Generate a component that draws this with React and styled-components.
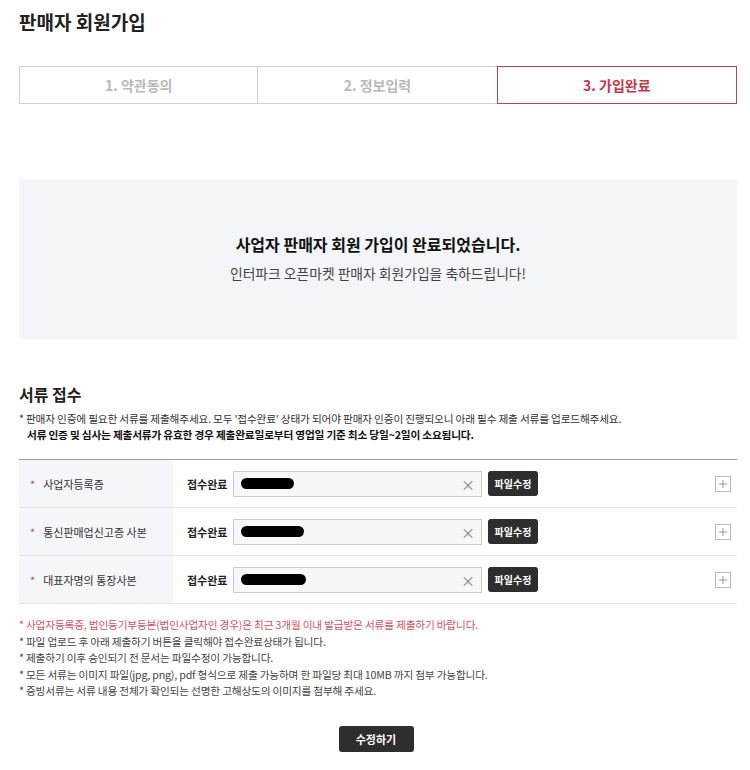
import React from 'react'
import styled, { createGlobalStyle } from 'styled-components'

const GlobalStyle = createGlobalStyle`
  html, body {
    margin: 0;
    padding: 0;
    background: #fff;
  }
  body {
    font-family: "Noto Sans CJK KR", "Noto Sans", sans-serif;
    color: #222;
  }
`

const Page = styled.div`
  width: 750px;
  padding: 8px 13px 0 19px;
  box-sizing: border-box;
`

const Title = styled.h1`
  margin: 0;
  font-size: 19px;
  font-weight: 700;
  line-height: 28px;
  color: #222;
`

const Steps = styled.div`
  display: grid;
  grid-template-columns: repeat(3, 1fr);
  margin-top: 30px;
  height: 38px;
`

const Step = styled.div`
  display: flex;
  align-items: center;
  justify-content: center;
  border: 1px solid ${p => (p.$active ? '#b8474d' : '#cfcfcf')};
  margin-left: ${p => (p.$first ? '0' : '-1px')};
  position: relative;
  z-index: ${p => (p.$active ? 1 : 0)};
  font-size: 14px;
  font-weight: 700;
  color: ${p => (p.$active ? '#c5394a' : '#b9b9b9')};
`

const DoneBox = styled.div`
  margin-top: 75px;
  height: 160px;
  background: #f4f5f8;
  display: flex;
  flex-direction: column;
  align-items: center;
  justify-content: center;
  gap: 8px;
  padding-bottom: 2px;
  box-sizing: border-box;
`

const DoneTitle = styled.div`
  font-size: 16px;
  font-weight: 700;
  color: #111;
  line-height: 22px;
`

const DoneSub = styled.div`
  font-size: 13.8px;
  color: #444;
  line-height: 20px;
`

const SectionTitle = styled.h2`
  margin: 44px 0 0;
  font-size: 16px;
  font-weight: 700;
  line-height: 22px;
  color: #222;
`

const Guide = styled.div`
  margin-top: 6px;
  font-size: 10.7px;
  line-height: 16px;
  color: #333;
  letter-spacing: -0.2px;
`

const GuideStrong = styled.div`
  padding-left: 8px;
  font-weight: 700;
  color: #111;
`

const Table = styled.div`
  margin-top: 16px;
  border-top: 1px solid #9c9c9c;
`

const Row = styled.div`
  display: grid;
  grid-template-columns: 154px 1fr;
  height: 48px;
  box-sizing: border-box;
  border-bottom: 1px solid #e3e3e3;
`

const Label = styled.div`
  display: flex;
  align-items: center;
  background: #f5f6f9;
  padding-left: 11px;
  font-size: 11px;
  color: #333;
  gap: 8px;
`

const Star = styled.span`
  color: #d24050;
  font-size: 11px;
`

const Cell = styled.div`
  display: flex;
  align-items: center;
  padding-left: 14px;
  padding-right: 6px;
`

const Status = styled.span`
  font-size: 11px;
  font-weight: 700;
  color: #222;
  width: 46px;
`

const FileInput = styled.div`
  width: 249px;
  height: 26px;
  box-sizing: border-box;
  border: 1px solid #cccccc;
  background: #f6f7f9;
  display: flex;
  align-items: center;
  justify-content: space-between;
  padding: 0 6px 0 7px;
`

const Redact = styled.span`
  display: block;
  width: ${p => p.$w}px;
  height: 11px;
  border-radius: 6px;
  background: #000;
`

const Clear = styled.span`
  font-size: 14px;
  color: #888;
  line-height: 1;
`

const DarkButton = styled.button`
  border: 0;
  border-radius: 3px;
  background: #2e2e2e;
  color: #fff;
  font-family: inherit;
  font-weight: 700;
  font-size: ${p => (p.$big ? '11px' : '10px')};
  height: ${p => (p.$big ? '26px' : '25px')};
  padding: 0;
  width: ${p => (p.$big ? '75px' : '50px')};
  cursor: pointer;
`

const FileButton = styled(DarkButton)`
  margin-left: 6px;
`

const PlusBox = styled.span`
  margin-left: auto;
  width: 14px;
  height: 14px;
  border: 1px solid #bbb;
  display: flex;
  align-items: center;
  justify-content: center;
`

const Notes = styled.ul`
  list-style: none;
  margin: 13px 0 0;
  padding: 0;
  font-size: 10.7px;
  line-height: 16.5px;
  color: #444;
  letter-spacing: -0.2px;
`

const Note = styled.li`
  color: ${p => (p.$red ? '#d8505d' : '#444')};
`

const Footer = styled.div`
  display: flex;
  justify-content: center;
  margin-top: 26px;
  padding-right: 4px;
`

const docs = [
  { name: '사업자등록증', w: 53 },
  { name: '통신판매업신고증 사본', w: 63 },
  { name: '대표자명의 통장사본', w: 65 },
]

export default function App() {
  return (
    <Page>
      <GlobalStyle />
      <Title>판매자 회원가입</Title>
      <Steps>
        <Step $first>1. 약관동의</Step>
        <Step>2. 정보입력</Step>
        <Step $active>3. 가입완료</Step>
      </Steps>

      <DoneBox>
        <DoneTitle>사업자 판매자 회원 가입이 완료되었습니다.</DoneTitle>
        <DoneSub>인터파크 오픈마켓 판매자 회원가입을 축하드립니다!</DoneSub>
      </DoneBox>

      <SectionTitle>서류 접수</SectionTitle>
      <Guide>
        <div>* 판매자 인증에 필요한 서류를 제출해주세요. 모두 '접수완료' 상태가 되어야 판매자 인증이 진행되오니 아래 필수 제출 서류를 업로드해주세요.</div>
        <GuideStrong>서류 인증 및 심사는 제출서류가 유효한 경우 제출완료일로부터 영업일 기준 최소 당일~2일이 소요됩니다.</GuideStrong>
      </Guide>

      <Table>
        {docs.map(d => (
          <Row key={d.name}>
            <Label>
              <Star>*</Star>
              {d.name}
            </Label>
            <Cell>
              <Status>접수완료</Status>
              <FileInput>
                <Redact $w={d.w} />
                <Clear>×</Clear>
              </FileInput>
              <FileButton>파일수정</FileButton>
              <PlusBox>
                <svg width="10" height="10" viewBox="0 0 10 10">
                  <path d="M5 1v8M1 5h8" stroke="#999" strokeWidth="1" />
                </svg>
              </PlusBox>
            </Cell>
          </Row>
        ))}
      </Table>

      <Notes>
        <Note $red>* 사업자등록증, 법인등기부등본(법인사업자인 경우)은 최근 3개월 이내 발급받은 서류를 제출하기 바랍니다.</Note>
        <Note>* 파일 업로드 후 아래 제출하기 버튼을 클릭해야 접수완료상태가 됩니다.</Note>
        <Note>* 제출하기 이후 승인되기 전 문서는 파일수정이 가능합니다.</Note>
        <Note>* 모든 서류는 이미지 파일(jpg, png), pdf 형식으로 제출 가능하며 한 파일당 최대 10MB 까지 첨부 가능합니다.</Note>
        <Note>* 증빙서류는 서류 내용 전체가 확인되는 선명한 고해상도의 이미지를 첨부해 주세요.</Note>
      </Notes>

      <Footer>
        <DarkButton $big>수정하기</DarkButton>
      </Footer>
    </Page>
  )
}
